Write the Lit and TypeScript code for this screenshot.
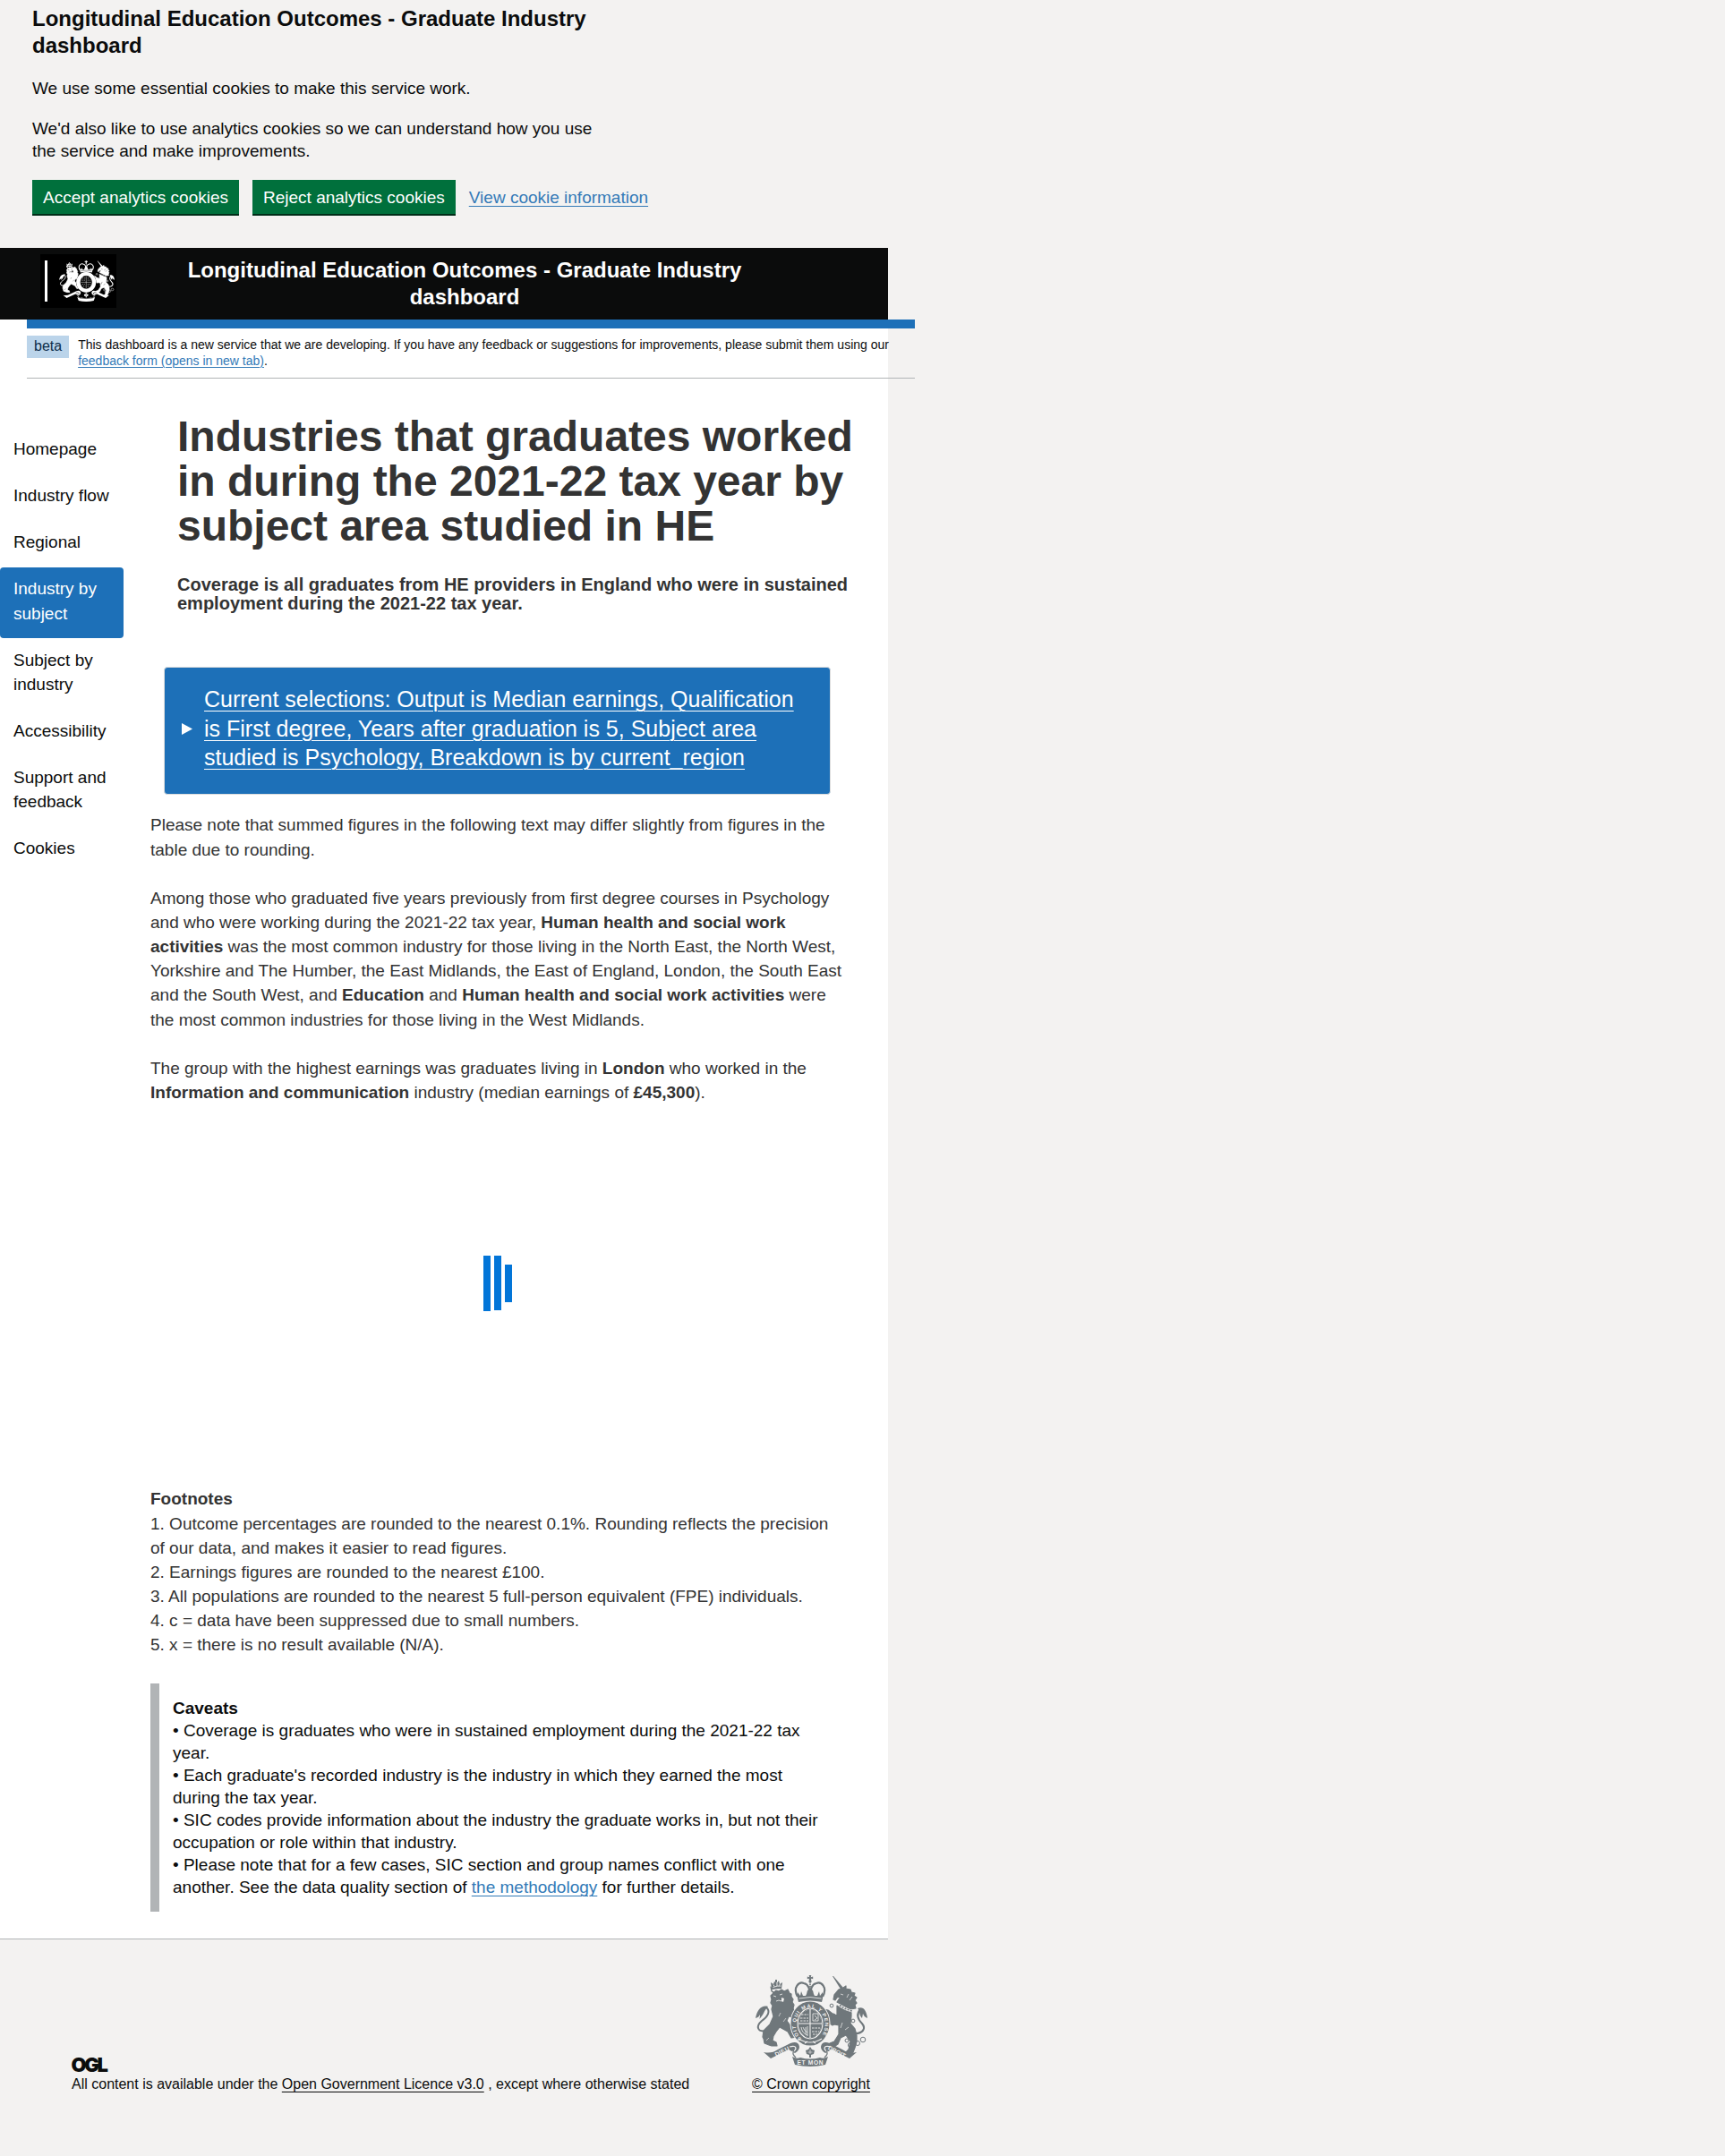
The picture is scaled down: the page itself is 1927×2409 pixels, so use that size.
import { LitElement, html, svg, css } from "lit";
import { customElement, property } from "lit/decorators.js";
import { classMap } from "lit/directives/class-map.js";

@customElement("royal-crest")
class RoyalCrest extends LitElement {
  @property({ type: Boolean }) motto = false;

  static styles = css`
    :host { display: block; }
    .art { display: block; width: 100%; height: 100%; overflow: visible; }
    .fg { fill: var(--crest-ink); }
    .beast { fill: var(--crest-ink); stroke: var(--crest-ink); stroke-width: 1.2; stroke-linejoin: round; }
    .bg { fill: var(--crest-paper); }
    .line { fill: none; stroke: var(--crest-ink); }
    .cut { fill: none; stroke: var(--crest-paper); }
    .round { stroke-linecap: round; stroke-linejoin: round; }
    .motto { fill: var(--crest-paper); font: 700 6.6px "Liberation Sans", Arial, sans-serif; }
    .garter { fill: var(--crest-paper); font: 700 5.6px "Liberation Sans", Arial, sans-serif; }
  `;

  private crown(x: number, y: number) {
    return svg`<g transform="translate(${x} ${y})">
      <path class="fg" d="M-1.300 0h2.600l-.5 2.200 2.400-.6v2.600L1 3.700 1.600 8h-3.200l.6-4.300-2.200.5V1.600l2.400.6z"/>
      <path class="line" stroke-width="2.200" d="M-14 24C-20 13-12 7-7 9c5 1 7 6 7 15M14 24C20 13 12 7 7 9 2 10 0 15 0 24"/>
      <path class="line" stroke-width="1.600" stroke-dasharray="1.800 .7" d="M0 7v15"/>
      <path class="fg" d="M-14 26l0-7 3 4 1-5 2 5 3 0 1-2 1-4 3-2 3 2 1 4 1 2 3 0 2-5 1 5 3-4 0 7-1 4q-13-3-26 0z"/>
      <path class="cut" stroke-width=".8" d="M-12.500 26q12.500-3 25 0"/>
    </g>`;
  }

  render() {
    return html`<svg class="art" viewBox="0 0 125 102" preserveAspectRatio="none" aria-hidden="true">
      <!-- Lion -->
      <path class="line round" stroke-width="2" d="M12 62C2 64 0 57 7 51 14 46 17 40 12 36"/>
      <path class="fg" d="M14 35C7 33 2 38 0 48c3-1 4-2 5-4 0 2 0 3-1 5 5-4 5-9 10-14z"/>
      <path class="beast" d="M18 18l3 1 2-2 3 1 3-2 3 2 4-2 2 4 2 1v3l2 3-1 3 2 3-1 4 2 5 4 4 1 4-4 1-3-4-5-1-2 5 3 4 3 4 3 5 5 1-2 4-7 1-4-7-9-5-4 5-3 5-1 5 4 2 1 4h-6l-3-1-5-2-1-5-1-2 1-7 7-7 4-9-2-8 1-4-2-3 1-4-1-4 3-3-2-3-1-4z"/>
      <path class="fg" d="M18 16l-1-8 3 2 1-3 3 2 2-3 1 4 3-2-1 7q-5 0-11 1zM22 5h2v3h-2z"/>
      <path class="cut" stroke-width=".9" d="M19.500 13.500q5-2 9-1.500M20 10.500l1 2M24 9v3M27.500 9.500l-1 2"/>
      <path class="cut" stroke-width=".8" d="M20 23l3 1M27 22l3-1M23 29l3-1 3 1"/>
      <path class="cut" stroke-width=".6" d="M28 42l-2 4M34 48l-3 4M27 61l4 1M12 73l3-3"/>
      <path class="bg" d="M29 25l3 1-1 4-2-1z"/>
      <!-- Unicorn -->
      <path class="line round" stroke-width="2.100" d="M112 65c7 0 12-5 7-11-5-5-7-10-2-16"/>
      <path class="fg" d="M114 37c6-3 10 2 11 11-3-1-4-3-5-5l-1 5c-4-4-2-8-5-11z"/>
      <path class="fg" d="M86 1l1 0 11 13-3 1.500z"/>
      <path class="beast" d="M88 22l5-6 5-2 3-2 0 3 5 1 1 3 4 1-1 3 3 2-2 3 2 3-2 2 1 4-6 1-15-8 4-6-4 1-2 3-2-1z"/>
      <path class="beast" d="M91 34l16 7 0 5-1 8 5 6 2 7 0 7-2 7-2 5-6 4-4-2 5-5 2-9-5-7-6 3-3 7-6 4-3-1 0-4 5-2 5-8 0-10-5-1-2 1-3-2-1-6-6-3-2-4 2-3 5 1 5 4 5 2z"/>
      <path class="cut" stroke-width="2.600" d="M93 33q6 5 16 7.500"/>
      <path class="line" stroke-width="1.600" stroke-dasharray="2 1.300" d="M94 33.500q6 4.500 14 6.500"/>
      <path class="cut" stroke-width=".7" d="M95 21l3 1M104 21l-2 4M108 24l-3 4M97 53l-2 6M104 58l-4 3"/>
      <circle class="line" cx="85" cy="34" r="1.900" stroke-width="1"/>
      <circle class="line" cx="87" cy="45" r="2" stroke-width="1"/>
      <circle class="line" cx="109" cy="51" r="1.900" stroke-width="1"/>
      <circle class="line" cx="102" cy="73" r="2" stroke-width="1"/>
      <circle class="line" cx="106" cy="78" r="2.600" stroke-width="1"/>
      <circle class="line" cx="114" cy="76" r="2.500" stroke-width="1"/>
      <circle class="line" cx="120" cy="72" r="2.800" stroke-width="1"/>
      <!-- Ribbon -->
      <path class="fg" d="M9 86q9 2 16-3l14-7q9-3 10 4 0 4-5 7l-7-4-20 10z"/>
      <path class="fg" d="M113 86q-9 2-16-3l-14-7q-9-3-10 4 0 4 5 7l7-4 20 10z"/>
      <path class="cut" stroke-width="1.200" d="M38 80q7-2 7 2-1 3-5 4M84 80q-7-2-7 2 1 3 5 4"/>
      <path class="line" stroke-width="1.300" d="M43 83q-3 5 2 9M79 83q3 5-2 9"/>
      <path class="fg" d="M41 91q5 3 9 1 11 3 22 0 4 2 9-1l-3 9q-17 4-34 0z"/>
      <!-- Rose under the shield -->
      <path class="fg" d="M61 80l2 3 3 1-1 4-3 1v3h-2v-3l-3-1-1-4 3-1z"/>
      <path class="cut" stroke-width=".6" d="M61 83v5M58.500 86h5"/>
      <!-- Garter and shield -->
      <ellipse class="bg" cx="61" cy="54" rx="22.500" ry="25.500"/>
      <ellipse class="line" cx="61" cy="54" rx="18" ry="21" stroke-width="7"/>
      <ellipse class="line" cx="61" cy="54" rx="13" ry="16" stroke-width="1"/>
      ${this.motto
        ? svg`<path id="ring" fill="none" d="M51.500 71A16.300 19.300 0 1 1 71 71"/>
            <text class="garter" textLength="84" lengthAdjust="spacing"><textPath href="#ring">SOIT QUI MAL Y PENSE</textPath></text>
            <path class="cut" stroke-width="1.200" d="M48 71q13 8 26 0M55 76l3-2M64 74l3 2"/>`
        : svg`<ellipse class="line" cx="61" cy="54" rx="18" ry="21" stroke-width="8.500"/>`}
      <ellipse class=${this.motto ? "fg" : "bg"} cx="61" cy="54" rx="12.500" ry="15.500"/>
      ${this.motto
        ? svg`<path class="cut" stroke-width="1.100" d="M61 38v32M48 54h26"/>
            <path class="cut" stroke-width=".9" stroke-dasharray="2.500 1" d="M51 44h8M50 48h9M50 51h9M63 59h9M63 63h8M64 66h5"/>
            <path class="cut" stroke-width=".8" d="M64 43h6v8h-6zM66 45l3 3-3 2M51 58q1 7 7 9M53 58q1 4 5 6M56 58v8M58 57v11"/>`
        : svg`<path class="line" stroke-width="1" d="M61 39v30M49 54h24"/>
            <path class="line" stroke-width="1.200" stroke-dasharray="3 1.500" d="M52 44h7M51 49h8M64 59h7M64 64h5M64 44h5M64 49h7M52 59h6M54 64h5"/>`}
      ${this.crown(61, 0)}
      ${this.motto
        ? svg`<text class="motto" transform="translate(23 91) rotate(-27)" textLength="17">DIEU</text>
            <text class="motto" x="46.500" y="99.500" textLength="29">ET MON</text>
            <text class="motto" transform="translate(80.500 82.500) rotate(28)" textLength="21">DROIT</text>`
        : svg`<path class="cut" stroke-width="1.200" d="M46 93q15 3 30 0"/>`}
    </svg>`;
  }
}

interface NavItem { label: string; active?: boolean; }

const NAV: NavItem[] = [
  { label: "Homepage" },
  { label: "Industry flow" },
  { label: "Regional" },
  { label: "Industry by subject", active: true },
  { label: "Subject by industry" },
  { label: "Accessibility" },
  { label: "Support and feedback" },
  { label: "Cookies" },
];

const FOOTNOTES = [
  "1. Outcome percentages are rounded to the nearest 0.1%. Rounding reflects the precision of our data, and makes it easier to read figures.",
  "2. Earnings figures are rounded to the nearest £100.",
  "3. All populations are rounded to the nearest 5 full-person equivalent (FPE) individuals.",
  "4. c = data have been suppressed due to small numbers.",
  "5. x = there is no result available (N/A).",
];

@customElement("app-root")
class AppRoot extends LitElement {
  static styles = css`
    :host {
      display: block;
      min-height: 2409px;
      background: #f3f2f1;
      color: #0b0c0c;
      font: 19px/25px "Liberation Sans", Arial, sans-serif;
    }
    h1, h2, p, ul { margin: 0; padding: 0; }
    a { color: inherit; text-decoration: underline; text-decoration-thickness: 1px; text-underline-offset: 0.1578em; }
    .link { color: #337ab7; }
    .page { width: 992px; }

    .cookies { box-sizing: border-box; height: 277px; padding: 6px 0 0 36px; }
    .title { font-size: 24px; line-height: 30px; font-weight: 700; }
    .cookies .title { width: 640px; margin-bottom: 20px; }
    .cookies p { width: 650px; margin-bottom: 20px; }
    .actions { display: flex; align-items: flex-start; gap: 15px; }
    .button {
      box-sizing: border-box; height: 38px; padding: 10px 12px 9px; border: 0;
      background: #00703c; color: #fff; box-shadow: 0 2px 0 #002d18;
      font: inherit; line-height: 19px; white-space: nowrap;
    }
    .actions a { margin-top: 7px; }

    .header { display: flex; height: 80px; background: #0b0c0c; color: #fff; }
    .logo {
      display: flex; box-sizing: border-box; width: 85px; height: 60px;
      margin: 7px 0 0 45px; padding: 7px 2px 0 5px; gap: 13px; background: #000;
      --crest-ink: #fff; --crest-paper: #000;
    }
    .logo-bar { width: 3px; height: 46px; background: #fff; }
    .logo royal-crest { width: 62px; height: 46px; }
    .header .title { width: 704px; margin: 10px 0 0 37px; text-align: center; }

    .body { background: #fff; height: 1809px; }
    .phase {
      display: flex; align-items: flex-start; box-sizing: border-box; width: 992px; height: 66px;
      margin-left: 30px; padding-top: 8px; border-top: 10px solid #1d70b8; border-bottom: 1px solid #b1b4b6;
    }
    .tag { height: 25px; padding: 0 8px; background: #bbd4ea; color: #0c2d4a; font-size: 16px; line-height: 23px; }
    .phase-text { flex: 1; margin: 1px 0 0 10px; font-size: 14px; line-height: 18px; }

    .columns { display: flex; }
    .nav { width: 138px; padding-top: 55px; list-style: none; flex: none; line-height: 27.14px; }
    .nav-item { padding: 10px 15px 15px; border-radius: 4px; }
    .nav-item.active { padding-bottom: 14px; margin-bottom: 1px; background: #1d70b8; color: #fff; }

    .content { width: 776px; margin-left: 30px; color: #333; line-height: 27.14px; }
    .heading { width: 765px; margin: 40px 0 0 30px; font-size: 48px; line-height: 50px; }
    .coverage { width: 765px; margin: 30px 0 0 30px; font-size: 20px; line-height: 21px; }
    .selections {
      display: flex; align-items: center; box-sizing: border-box; width: 745px; height: 143px;
      margin: 60px 0 20.400px 15px; padding: 0 0 5px 19px; border: 1px solid #ddd; border-radius: 4px;
      background: #1d70b8; color: #fff; font-size: 25px; line-height: 32.6px;
    }
    .marker { width: 12px; height: 13px; margin: 0 13px 0 0; fill: #fff; flex: none; }
    .selections a { width: 675px; }
    .para { margin-bottom: 27.2px; }
    .loading { display: flex; align-items: center; gap: 4px; height: 400px; margin: -27.6px 0 27.6px; padding-left: 372px; }
    .bar { width: 8px; height: 62px; background: #0275d8; }
    .bar.second { height: 61px; }
    .bar.third { height: 42px; }
    .caveats {
      margin-top: 30px; padding: 15px; border-left: 10px solid #b1b4b6;
      color: #0b0c0c; line-height: 25px;
    }

    .footer {
      display: flex; align-items: flex-end; box-sizing: border-box; height: 173px;
      padding-left: 80px; border-top: 1px solid #b1b4b6; font-size: 16px; line-height: 20px;
    }
    .licence { flex: 1; }
    .ogl { display: block; width: 42px; height: 18px; margin-bottom: 2px; overflow: visible; }
    .ogl text { font: 900 22px Inter, "Liberation Sans", sans-serif; fill: #0b0c0c; }
    .copyright { display: flex; flex-direction: column; align-items: center; width: 132px; margin-right: 20px; --crest-ink: #6f777b; --crest-paper: #f3f2f1; }
    .copyright royal-crest { width: 125px; height: 102px; margin-bottom: 10px; }
  `;

  render() {
    return html`
      <div class="page">
        <section class="cookies">
          <h2 class="title">Longitudinal Education Outcomes - Graduate Industry dashboard</h2>
          <p>We use some essential cookies to make this service work.</p>
          <p>We'd also like to use analytics cookies so we can understand how you use the service and make improvements.</p>
          <div class="actions">
            <button class="button">Accept analytics cookies</button>
            <button class="button">Reject analytics cookies</button>
            <a class="link">View cookie information</a>
          </div>
        </section>

        <header class="header">
          <div class="logo"><div class="logo-bar"></div><royal-crest></royal-crest></div>
          <div class="title">Longitudinal Education Outcomes - Graduate Industry dashboard</div>
        </header>

        <div class="body">
          <div class="phase">
            <span class="tag">beta</span>
            <p class="phase-text">This dashboard is a new service that we are developing. If you have any feedback or suggestions for improvements, please submit them using our<br /><a class="link">feedback form (opens in new tab)</a>.</p>
          </div>

          <div class="columns">
            <ul class="nav">
              ${NAV.map((n) => html`<li class=${classMap({ "nav-item": true, active: !!n.active })}>${n.label}</li>`)}
            </ul>

            <main class="content">
              <h1 class="heading">Industries that graduates worked in during the 2021-22 tax year by subject area studied in HE</h1>
              <h2 class="coverage">Coverage is all graduates from HE providers in England who were in sustained employment during the 2021-22 tax year.</h2>

              <div class="selections">
                <svg class="marker" viewBox="0 0 12 13"><path d="M0 0L12 6.500 0 13z" /></svg>
                <a>Current selections: Output is Median earnings, Qualification is First degree, Years after graduation is 5, Subject area studied is Psychology, Breakdown is by current_region</a>
              </div>

              <p class="para">Please note that summed figures in the following text may differ slightly from figures in the table due to rounding.</p>
              <p class="para">Among those who graduated five years previously from first degree courses in Psychology and who were working during the 2021-22 tax year, <b>Human health and social work activities</b> was the most common industry for those living in the North East, the North West, Yorkshire and The Humber, the East Midlands, the East of England, London, the South East and the South West, and <b>Education</b> and <b>Human health and social work activities</b> were the most common industries for those living in the West Midlands.</p>
              <p class="para">The group with the highest earnings was graduates living in <b>London</b> who worked in the <b>Information and communication</b> industry (median earnings of <b>£45,300</b>).</p>

              <div class="loading"><div class="bar"></div><div class="bar second"></div><div class="bar third"></div></div>

              <p><b>Footnotes</b></p>
              ${FOOTNOTES.map((f) => html`<p>${f}</p>`)}

              <div class="caveats">
                <p><b>Caveats</b></p>
                <p>• Coverage is graduates who were in sustained employment during the 2021-22 tax year.</p>
                <p>• Each graduate's recorded industry is the industry in which they earned the most during the tax year.</p>
                <p>• SIC codes provide information about the industry the graduate works in, but not their occupation or role within that industry.</p>
                <p>• Please note that for a few cases, SIC section and group names conflict with one another. See the data quality section of <a class="link">the methodology</a> for further details.</p>
              </div>
            </main>
          </div>
        </div>

        <footer class="footer">
          <div class="licence">
            <svg class="ogl" viewBox="0 0 42 18"><text x="-0.500" y="15.800" textLength="41.500" lengthAdjust="spacing">OGL</text></svg>
            All content is available under the <a>Open Government Licence v3.0</a> , except where otherwise stated
          </div>
          <div class="copyright">
            <royal-crest motto></royal-crest>
            <a>© Crown copyright</a>
          </div>
        </footer>
      </div>
    `;
  }
}
